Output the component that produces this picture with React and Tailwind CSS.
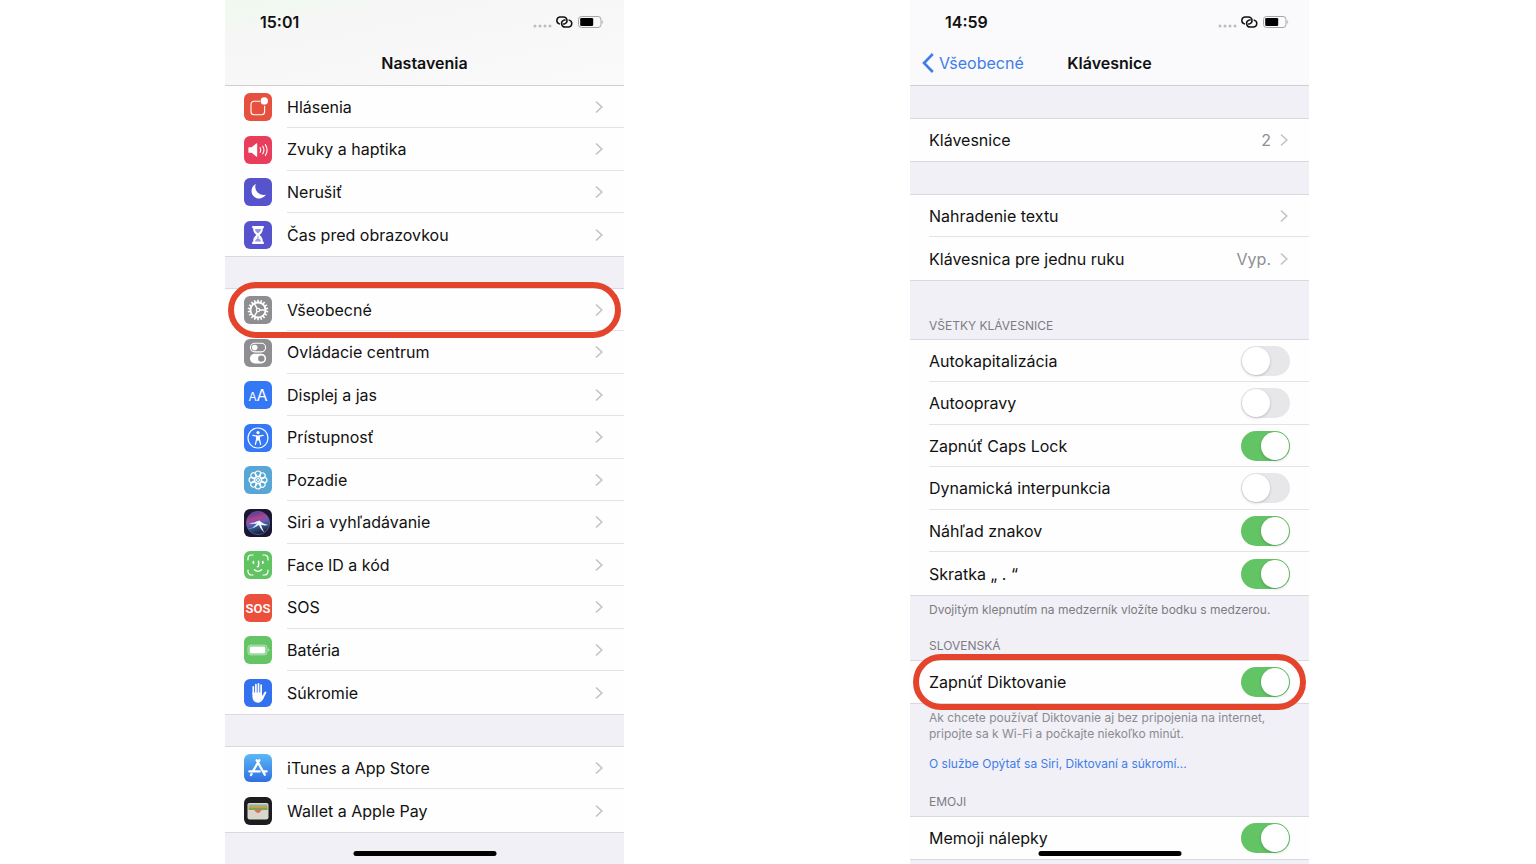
import React, { useState } from 'react';

const PETALS = [0, 45, 90, 135, 180, 225, 270, 315];
const TEETH = [0, 20, 40, 60, 80, 100, 120, 140, 160, 180, 200, 220, 240, 260, 280, 300, 320, 340];

function Tile({ color, children }) {
  return (
    <svg viewBox="0 0 28 28" className="size-7 shrink-0" aria-hidden="true">
      <rect width="28" height="28" rx="6" fill={color} />
      {children}
    </svg>
  );
}

const icons = {
  notifications: (
    <Tile color="#e5503f">
      <path d="M16 8.2h-6a3 3 0 0 0-3 3v7.6a3 3 0 0 0 3 3h7.6a3 3 0 0 0 3-3v-6" fill="none" stroke="#fff" strokeWidth="1.1" />
      <circle cx="20.3" cy="7.9" r="3.7" fill="#fff" />
    </Tile>
  ),
  sounds: (
    <Tile color="#e93d5c">
      <path d="M5 11.2h2.6l4.6-3.7c.5-.4 1-.1 1 .5v12c0 .6-.5.9-1 .5l-4.6-3.7H5c-.4 0-.6-.2-.6-.6v-4.4c0-.4.2-.6.6-.6z" fill="#fff" />
      <g fill="none" stroke="#fff" strokeWidth="1.1" strokeLinecap="round">
        <path d="M16.1 11.7c.9 1.4.9 3.2 0 4.6" />
        <path d="M18.7 10.2c1.5 2.3 1.5 5.3 0 7.6" />
        <path d="M21.3 8.6c2.2 3.3 2.2 7.5 0 10.8" />
      </g>
    </Tile>
  ),
  moon: (
    <Tile color="#5753cd">
      <path d="M11.8 6.1A7.6 7.6 0 1 0 21.9 16.4 8 8 0 0 1 11.8 6.1z" fill="#fff" />
    </Tile>
  ),
  hourglass: (
    <Tile color="#5753cd">
      <path d="M8.2 5h11.6v2.3h-1c0 3.2-.7 4.6-3.2 6.7 2.5 2.1 3.2 3.5 3.2 6.7h1V23H8.2v-2.3h1c0-3.2.7-4.6 3.2-6.7-2.5-2.1-3.2-3.5-3.2-6.7h-1z" fill="#fff" />
      <path d="M11 8h6c-.2 1.8-.7 2.6-2.3 4h-1.4c-1.6-1.4-2.1-2.2-2.3-4zM13.5 15h1v2.6c1.4.5 2.1 1.4 2.6 2.9h-6.2c.5-1.5 1.2-2.4 2.6-2.9z" fill="#5753cd" opacity="0.6" />
    </Tile>
  ),
  gear: (
    <Tile color="#8e8e92">
      <g stroke="#fff" fill="none">
        {TEETH.map(a => (
          <path key={a} d="M14 3.7v2.6" strokeWidth="1.6" transform={`rotate(${a} 14 14)`} />
        ))}
        <circle cx="14" cy="14" r="7.5" strokeWidth="1.8" />
        <circle cx="14" cy="14" r="1.7" strokeWidth="1.2" />
        <path d="M15.8 14h5.6M13.1 12.4l-2.8-4.9M13.1 15.6l-2.8 4.9" strokeWidth="1.4" />
      </g>
    </Tile>
  ),
  controls: (
    <Tile color="#8e8e92">
      <rect x="6.4" y="4.3" width="15.2" height="8.6" rx="4.3" fill="none" stroke="#fff" strokeWidth="1.1" />
      <circle cx="10.7" cy="8.6" r="2.8" fill="#fff" />
      <rect x="5.9" y="14.8" width="16.2" height="9.6" rx="4.8" fill="#fff" />
      <circle cx="17.3" cy="19.6" r="3.2" fill="#8e8e92" />
    </Tile>
  ),
  display: (
    <Tile color="#3478f6">
      <text x="4.4" y="20" fontSize="12" fill="#fff" className="font-['Inter',sans-serif]">A</text>
      <text x="12.6" y="20" fontSize="16" fill="#fff" className="font-['Inter',sans-serif]">A</text>
    </Tile>
  ),
  accessibility: (
    <Tile color="#3478f6">
      <circle cx="14" cy="14" r="10" fill="none" stroke="#fff" strokeWidth="1.2" />
      <circle cx="14" cy="8.6" r="1.6" fill="#fff" />
      <path d="M8.9 11.4l3.7.7v3.2l-1.2 5M19.1 11.4l-3.7.7v3.2l1.2 5" fill="none" stroke="#fff" strokeWidth="1.3" strokeLinecap="round" />
      <path d="M12.1 11.6h3.8v5h-3.8z" fill="#fff" />
    </Tile>
  ),
  wallpaper: (
    <Tile color="#58a6d6">
      <g fill="none" stroke="#fff" strokeWidth="1.2">
        {PETALS.map(a => (
          <circle key={a} cx="14" cy="7.7" r="2.7" transform={`rotate(${a} 14 14)`} />
        ))}
        <circle cx="14" cy="14" r="3.6" strokeWidth="0.9" />
        <circle cx="14" cy="14" r="1.5" strokeWidth="0.9" />
        {PETALS.map(a => (
          <path key={a} d="M14 10.4v2" strokeWidth="0.8" transform={`rotate(${a + 22} 14 14)`} />
        ))}
      </g>
    </Tile>
  ),
  siri: (
    <Tile color="#1b1733">
      <defs>
        <linearGradient id="siriOrb" x1="0.3" y1="0" x2="0.6" y2="1">
          <stop offset="0" stopColor="#4b3a94" />
          <stop offset="0.3" stopColor="#b0428f" />
          <stop offset="0.5" stopColor="#6a5cb4" />
          <stop offset="0.75" stopColor="#2a4670" />
          <stop offset="1" stopColor="#14182f" />
        </linearGradient>
      </defs>
      <circle cx="14" cy="14" r="11.6" fill="url(#siriOrb)" stroke="#5f6ea0" strokeWidth="0.7" />
      <path d="M3.5 20c4.8-.8 8-3.4 11.5-7.8l.6 3.4c-3 2.600-7.800 4.600-12.100 4.400z" fill="#35b9dc" opacity="0.8" />
      <path d="M5 14.200c4.200-.4 7-1 10.400-2.600 2 2.200 4.700 3.600 9.200 4.400-3 .7-5.400.5-7.400-.2.500 2.600 1.600 5 3.200 7.600-2.900-2.200-4.400-4.600-5.500-7.600-1.700 1.500-3.700 2.500-6.400 3 2-1.300 3.300-2.500 4.600-4.200-2.700.4-5.200.3-8.100-.4z" fill="#eef8ff" />
    </Tile>
  ),
  faceid: (
    <Tile color="#5fc461">
      <g fill="none" stroke="#fff" strokeLinecap="round">
        <path d="M4 9V7.5A3.5 3.5 0 0 1 7.5 4H9M19 4h1.5A3.5 3.5 0 0 1 24 7.5V9M24 19v1.5a3.5 3.5 0 0 1-3.5 3.5H19M9 24H7.5A3.5 3.5 0 0 1 4 20.5V19" strokeWidth="1.2" />
        <path d="M9.4 10.5v1.6M18.8 10.5v1.6" strokeWidth="1.7" />
        <path d="M14.6 10.3v4.5c0 .7-.4 1-1.2 1M10.5 18.8c2 1.9 5 1.9 7 0" strokeWidth="1.5" />
      </g>
    </Tile>
  ),
  sos: (
    <Tile color="#ec4f3c">
      <text x="14" y="18.6" fontSize="13" textAnchor="middle" fill="#fff" className="font-['Roboto',sans-serif] font-semibold">SOS</text>
    </Tile>
  ),
  battery: (
    <Tile color="#65c466">
      <rect x="4" y="9.2" width="19" height="9.6" rx="2.6" fill="none" stroke="#fff" strokeWidth="0.8" opacity="0.7" />
      <rect x="5.6" y="10.6" width="15.8" height="6.8" rx="1.2" fill="#fff" />
      <path d="M24.4 12.4c1.2.7 1.2 2.5 0 3.2z" fill="#fff" opacity="0.8" />
    </Tile>
  ),
  hand: (
    <Tile color="#3471ee">
      <g stroke="#fff" strokeLinecap="round" fill="none" strokeWidth="1.7">
        <path d="M9.3 7.8V15M11.9 5.5V14M14.5 4.9V14M17.1 6.2V15" />
        <path d="M21.4 13.6l-2.6 4.6" strokeWidth="2" />
      </g>
      <path d="M8.4 13.5H18v3l2.2.6c-.9 3.8-2.8 6.6-6 6.6-3.6 0-5.8-2.4-5.8-6.2z" fill="#fff" />
    </Tile>
  ),
  appstore: (
    <Tile color="url(#storeBlue)">
      <defs>
        <linearGradient id="storeBlue" x1="0" y1="0" x2="0" y2="1">
          <stop offset="0" stopColor="#5cb8f5" />
          <stop offset="1" stopColor="#2f6fe0" />
        </linearGradient>
      </defs>
      <g stroke="#fff" strokeWidth="2.3" strokeLinecap="round" fill="none">
        <path d="M15.3 6.3L9 17.2M12.7 6.3L20.8 20.7M5.4 17.4h10.3M19.4 17.4h3.2M7.6 20l-.6 1" />
      </g>
    </Tile>
  ),
  wallet: (
    <Tile color="#1d1d1f">
      <rect x="3.5" y="6" width="21" height="16.4" rx="1.8" fill="#d9d6cc" />
      <path d="M4.5 7.4h19v2h-19z" fill="#8fb3ad" />
      <path d="M4.5 9h19v2.2h-19z" fill="#c9a548" />
      <path d="M4.5 10.8h19V13h-19z" fill="#7ba35b" />
      <path d="M9 12.8c2.2 0 2.4 3.2 5 3.2s2.8-3.2 5-3.2z" fill="#e0705c" />
    </Tile>
  ),
};

const settingsGroups = [
  [
    { icon: 'notifications', label: 'Hlásenia' },
    { icon: 'sounds', label: 'Zvuky a haptika' },
    { icon: 'moon', label: 'Nerušiť' },
    { icon: 'hourglass', label: 'Čas pred obrazovkou' },
  ],
  [
    { icon: 'gear', label: 'Všeobecné', marked: true },
    { icon: 'controls', label: 'Ovládacie centrum' },
    { icon: 'display', label: 'Displej a jas' },
    { icon: 'accessibility', label: 'Prístupnosť' },
    { icon: 'wallpaper', label: 'Pozadie' },
    { icon: 'siri', label: 'Siri a vyhľadávanie' },
    { icon: 'faceid', label: 'Face ID a kód' },
    { icon: 'sos', label: 'SOS' },
    { icon: 'battery', label: 'Batéria' },
    { icon: 'hand', label: 'Súkromie' },
  ],
  [
    { icon: 'appstore', label: 'iTunes a App Store' },
    { icon: 'wallet', label: 'Wallet a Apple Pay' },
  ],
];

const keyboardSwitches = [
  { id: 'autocap', label: 'Autokapitalizácia', on: false },
  { id: 'autocorrect', label: 'Autoopravy', on: false },
  { id: 'caps', label: 'Zapnúť Caps Lock', on: true },
  { id: 'punctuation', label: 'Dynamická interpunkcia', on: false },
  { id: 'preview', label: 'Náhľad znakov', on: true },
  { id: 'shortcut', label: 'Skratka „ . “', on: true },
];

function StatusBar({ time }) {
  return (
    <div className="flex h-11 items-center justify-between pr-[20px] pl-[35px]">
      <span className="text-base font-semibold">{time}</span>
      <svg viewBox="0 0 72 14" className="h-[14px] w-[72px]" aria-hidden="true">
        <g fill="#bdbdbf">
          <circle cx="3" cy="11" r="1.5" />
          <circle cx="8" cy="11" r="1.5" />
          <circle cx="13" cy="11" r="1.5" />
          <circle cx="18" cy="11" r="1.5" />
        </g>
        <g fill="none" stroke="#111" strokeWidth="1.5" strokeLinecap="round">
          <path d="M27.4 8.9A3.6 3.6 0 0 1 27.8 1.900h3.600A3.600 3.600 0 0 1 32.600 8.900H31.500" />
          <path d="M37.200 5.100A3.600 3.600 0 0 1 36.800 12.100h-3.600A3.600 3.600 0 0 1 32 5.100H33.100" />
        </g>
        <rect x="46.5" y="1.5" width="22.5" height="11" rx="3" fill="none" stroke="#a5a5a8" />
        <rect x="48.2" y="3" width="13" height="8" rx="1.3" fill="#000" />
        <path d="M70.3 5.2c1.2.7 1.2 2.9 0 3.6z" fill="#a5a5a8" />
      </svg>
    </div>
  );
}

function Chevron() {
  return (
    <svg viewBox="0 0 8 14" className="h-[14px] w-2 shrink-0" aria-hidden="true">
      <path d="M1 1.5L6.8 7L1 12.5" fill="none" stroke="#c5c5c8" strokeWidth="1.7" />
    </svg>
  );
}

// Red outline over a row, a little larger than the row itself
function Marker() {
  return (
    <span className="pointer-events-none absolute inset-x-[3px] -inset-y-[7px] z-10 rounded-full border-[6px] border-[#e4432c]" />
  );
}

function LinkRow({ icon, label, value, marked }) {
  return (
    <li className="group relative odd:h-[42px] even:h-[43px]">
      <a href="#" className="flex h-full items-center gap-[15px] pl-[19px]">
        {icon && icons[icon]}
        <span className="flex flex-1 items-center gap-[9px] self-stretch border-b border-[#e3e3e6] pr-[21px] group-last:border-b-0">
          <span className="flex-1">{label}</span>
          {value && <span className="text-[#8e8e93]">{value}</span>}
          <Chevron />
        </span>
      </a>
      {marked && <Marker />}
    </li>
  );
}

function SwitchRow({ id, label, on, marked }) {
  const [checked, setChecked] = useState(on);

  return (
    <li className="group relative pl-[19px] odd:h-[42px] even:h-[43px]">
      <div className="flex h-full items-center border-b border-[#e3e3e6] pr-[19px] group-last:border-b-0">
        <label htmlFor={id} className="flex-1">{label}</label>
        <input
          id={id}
          type="checkbox"
          role="switch"
          checked={checked}
          onChange={e => setChecked(e.target.checked)}
          className="flex h-[30px] w-[49px] cursor-pointer appearance-none items-center rounded-full bg-[#e7e7ea] px-px before:size-7 before:rounded-full before:bg-white before:shadow-[0_1px_3px_rgba(0,0,0,0.2)] checked:justify-end checked:bg-[#62c464]"
        />
      </div>
      {marked && <Marker />}
    </li>
  );
}

function List({ children }) {
  return <ul className="bg-[#fefefe]">{children}</ul>;
}

function Phone({ className, children }) {
  return (
    <section className={`relative flex min-h-screen flex-col bg-[#f1f0f6] ${className}`}>
      {children}
      <span className="absolute bottom-2 left-1/2 h-[5px] w-[143px] -translate-x-1/2 rounded-full bg-black" />
    </section>
  );
}

function SettingsScreen() {
  return (
    <Phone className="col-start-2">
      <header className="border-b border-[#cfcfd3] bg-linear-to-br from-[#effaef] via-[#f6f6f6] via-25% to-[#fafafa]">
        <StatusBar time="15:01" />
        <h1 className="flex h-[41px] items-center justify-center pb-[3px] font-semibold">Nastavenia</h1>
      </header>
      {settingsGroups.map((group, i) => (
        <React.Fragment key={i}>
          {i > 0 && <div className="h-[33px] border-y border-[#dadade]" />}
          <List>
            {group.map(item => <LinkRow key={item.label} {...item} />)}
          </List>
        </React.Fragment>
      ))}
      <div className="flex-1 border-t border-[#dadade]" />
    </Phone>
  );
}

function KeyboardScreen() {
  return (
    <Phone className="col-start-4">
      <header className="border-b border-[#cfcfd3] bg-[#fafafc]">
        <StatusBar time="14:59" />
        <div className="grid h-[41px] grid-cols-[1fr_auto_1fr] items-center pb-[3px]">
          <a href="#" className="flex items-center gap-[5px] pl-3 text-[#3f7de8]">
            <svg viewBox="0 0 12 20" className="h-5 w-3" aria-hidden="true">
              <path d="M10.8 1L2 10l8.8 9" fill="none" stroke="currentColor" strokeWidth="2.6" />
            </svg>
            Všeobecné
          </a>
          <h1 className="font-semibold">Klávesnice</h1>
        </div>
      </header>
      <div className="h-[33px] border-b border-[#dadade]" />
      <List>
        <LinkRow label="Klávesnice" value="2" />
      </List>
      <div className="h-[34px] border-y border-[#dadade]" />
      <List>
        <LinkRow label="Nahradenie textu" />
        <LinkRow label="Klávesnica pre jednu ruku" value="Vyp." />
      </List>
      <div className="border-y border-[#dadade] px-[19px] pt-[37px] pb-[5px] text-xs text-[#7c7c82]">
        <h2>VŠETKY KLÁVESNICE</h2>
      </div>
      <List>
        {keyboardSwitches.map(item => <SwitchRow key={item.id} {...item} />)}
      </List>
      <div className="border-y border-[#dadade] px-[19px] py-[6px] text-xs text-[#7c7c82]">
        <p>Dvojitým klepnutím na medzerník vložíte bodku s medzerou.</p>
        <h2 className="mt-5">SLOVENSKÁ</h2>
      </div>
      <List>
        <SwitchRow id="dictation" label="Zapnúť Diktovanie" on marked />
      </List>
      <div className="border-y border-[#dadade] px-[19px] py-[6px] text-xs text-[#7c7c82]">
        <p className="text-[#8b8b91]">
          Ak chcete používať Diktovanie aj bez pripojenia na internet,<br />
          pripojte sa k Wi-Fi a počkajte niekoľko minút.
        </p>
        <a href="#" className="mt-[14px] block text-[#3f7de8]">O službe Opýtať sa Siri, Diktovaní a súkromí...</a>
        <h2 className="mt-[22px]">EMOJI</h2>
      </div>
      <List>
        <SwitchRow id="memoji" label="Memoji nálepky" on />
      </List>
      <div className="flex-1 border-t border-[#dadade]" />
    </Phone>
  );
}

export default function App() {
  return (
    <main className="grid min-h-screen grid-cols-[225fr_399fr_286fr_399fr_227fr] bg-white font-['Inter','Liberation_Sans',sans-serif] text-base text-[#111]">
      <SettingsScreen />
      <KeyboardScreen />
    </main>
  );
}
